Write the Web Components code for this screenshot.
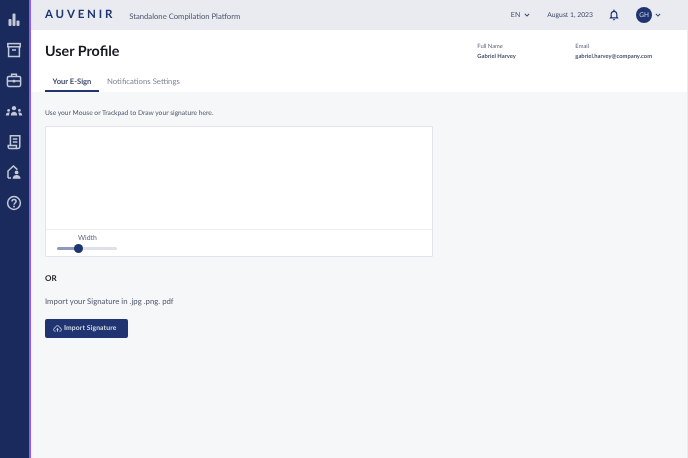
<!DOCTYPE html>
<html lang="en">
<head>
<meta charset="utf-8">
<title>User Profile</title>
<style>
html, body { margin: 0; height: 100%; }
body { font-family: Lato, sans-serif; overflow: hidden; text-rendering: geometricPrecision; }
</style>
</head>
<body>
<app-shell>
	<side-nav slot="nav"></side-nav>
	<top-bar slot="top"></top-bar>
	<profile-head slot="head"></profile-head>
	<esign-panel slot="main"></esign-panel>
</app-shell>
<script>
class AppShell extends HTMLElement {
	constructor() {
		super();
		this.attachShadow({ mode: "open" });
		this.shadowRoot.innerHTML = `
            <style>
                :host { display: flex; width: 688px; height: 458px; background: #f6f7f9; filter: blur(0.3px); }
                .content { flex: 1; display: flex; flex-direction: column; min-width: 0; border-right: 1px solid #e9ebf0; }
            </style>
            <slot name="nav"></slot>
            <div class="content">
                <slot name="top"></slot>
                <slot name="head"></slot>
                <slot name="main"></slot>
            </div>
        `;
	}
}

class SideNav extends HTMLElement {
	constructor() {
		super();
		this.attachShadow({ mode: "open" });
		this.shadowRoot.innerHTML = `
            <style>
                :host { display: flex; flex-direction: column; align-items: center; box-sizing: border-box; width: 31px; height: 458px; padding: 10px 1px 0 0; background: #1b2a5c; border-right: 2px solid #8d5cf6; gap: 12.7px; }
                svg { width: 18px; height: 18px; display: block; fill: none; stroke: #c3c9d8; stroke-width: 1.5; }
                .solid { fill: #c3c9d8; stroke: none; }
            </style>
            <svg viewBox="0 0 18 18"><g class="solid"><rect x="3.500" y="9" width="3" height="7" rx="1"/><rect x="7.500" y="3.500" width="3" height="12.500" rx="1"/><rect x="11.500" y="10.500" width="3" height="5.500" rx="1"/></g></svg>
            <svg viewBox="0 0 18 18"><rect x="2.800" y="2.600" width="12.400" height="3.200"/><path d="M3.600 5.800V15.400H14.400V5.800M7 9H11"/></svg>
            <svg viewBox="0 0 18 18"><rect x="2.400" y="5.400" width="13.200" height="10" rx="1.400"/><path d="M6.600 5.400V3.200H11.400V5.400M2.400 10H15.600"/><rect class="solid" x="7.800" y="8.800" width="2.400" height="2.600"/></svg>
            <svg viewBox="0 0 18 18"><g class="solid"><circle cx="9" cy="6.200" r="2.100"/><path d="M5.800 13.400c0-2.400 1.400-3.600 3.200-3.600s3.200 1.200 3.200 3.600z"/><circle cx="3.600" cy="8.400" r="1.400"/><path d="M.8 13.400c0-2 1.100-3 2.700-3 .5 0 .9.1 1.200.3-.5.7-.7 1.600-.7 2.700z"/><circle cx="14.400" cy="8.400" r="1.400"/><path d="M17.200 13.400c0-2-1.100-3-2.700-3-.5 0-.9.1-1.200.3.5.7.7 1.600.7 2.700z"/></g></svg>
            <svg viewBox="0 0 18 18"><path d="M5.400 12.600V2.800H14.800V13.800C14.800 14.800 14.200 15.400 13.200 15.400H4.800C3.800 15.400 3.200 14.800 3.200 13.800V12.600H11.400V15.200M7.800 6H12.400M7.800 9H12.400"/></svg>
            <svg viewBox="0 0 18 18"><path d="M3 15V8L8.400 3 12.400 6.600M3 15H6"/><circle class="solid" cx="11.600" cy="9.400" r="1.900"/><path class="solid" d="M7.600 15.800c0-2.500 1.700-3.800 4-3.800s4 1.300 4 3.800z"/></svg>
            <svg viewBox="0 0 18 18"><circle cx="9" cy="9" r="6.400"/><path d="M7 7.400C7 6.200 7.900 5.400 9 5.400s2.100.8 2.100 1.900c0 1.600-2.100 1.800-2.100 3.400"/><circle class="solid" cx="9" cy="12.500" r=".9"/></svg>
        `;
	}
}

class TopBar extends HTMLElement {
	constructor() {
		super();
		this.attachShadow({ mode: "open" });
		this.shadowRoot.innerHTML = `
            <style>
                :host { display: flex; align-items: center; box-sizing: border-box; height: 30px; padding: 0 26px 0 14px; background: #e9ebf0; color: #424c6b; font-size: 8px; }
                .logo { font-size: 11.500px; font-weight: 700; letter-spacing: 2.800px; color: #1f3470; margin-top: -1px; }
                .sub { margin-left: 14px; margin-top: 1px; font-size: 7.700px; color: #4b556f; }
                .lang { margin-left: auto; display: flex; align-items: center; gap: 4px; font-size: 7px; }
                .date { margin-left: 17px; font-size: 6.800px; }
                .bell { margin-left: 15px; width: 12px; height: 12px; display: block; }
                .avatar { margin-left: 16px; width: 16px; height: 16px; border-radius: 50%; background: #1f3470; color: #cdd3e2; font-size: 6.500px; display: flex; align-items: center; justify-content: center; }
                .caret { width: 6px; height: 4.300px; display: block; fill: none; stroke: #424c6b; stroke-width: 1.200; }
                .last { margin-left: 3px; }
            </style>
            <span class="logo">AUVENIR</span>
            <span class="sub">Standalone Compilation Platform</span>
            <span class="lang">EN <svg class="caret" viewBox="0 0 7 5"><path d="M1 1L3.500 3.600L6 1"/></svg></span>
            <span class="date">August 1, 2023</span>
            <svg class="bell" viewBox="0 0 12 12"><path fill="#1f3470" d="M6 .6c.4 0 .7.3.7.7v.5c1.700.3 2.700 1.600 2.700 3.400v2.600l1 1.100v.5H1.600v-.5l1-1.100V5.200c0-1.800 1-3.100 2.700-3.400v-.5c0-.4.3-.7.7-.7zM4.900 10.200h2.200c0 .7-.5 1.200-1.100 1.200s-1.100-.5-1.100-1.200z"/><path fill="#e9ebf0" d="M6 2.900c-1.400 0-2.200 1-2.200 2.400v3h4.400v-3c0-1.400-.8-2.400-2.200-2.400z"/></svg>
            <span class="avatar">GH</span>
            <svg class="caret last" viewBox="0 0 7 5"><path d="M1 1L3.500 3.600L6 1"/></svg>
        `;
	}
}

class InfoField extends HTMLElement {
	constructor() {
		super();
		this.attachShadow({ mode: "open" });
		this.shadowRoot.innerHTML = `
            <style>
                :host { display: block; font-size: 5.800px; line-height: 8px; color: #5d6579; }
                .value { margin-top: 2px; font-weight: 700; color: #4a5268; }
            </style>
            <div>${this.getAttribute("label")}</div>
            <div class="value"><slot></slot></div>
        `;
	}
}
customElements.define("info-field", InfoField);

class ProfileHead extends HTMLElement {
	constructor() {
		super();
		this.attachShadow({ mode: "open" });
		this.shadowRoot.innerHTML = `
            <style>
                :host { display: block; box-sizing: border-box; height: 62px; padding: 11px 0 0 14px; background: #fff; }
                .row { display: flex; justify-content: space-between; align-items: flex-start; padding-right: 35px; height: 23px; }
                h1 { margin: 1px 0 0; font-size: 14.300px; line-height: 20px; font-weight: 700; color: #15181f; }
                .info { display: flex; margin-top: 2px; }
                info-field:first-child { width: 98px; }
                .tabs { display: flex; margin-top: 8px; white-space: nowrap; }
                .tab { padding: 3px 8px; line-height: 12px; font-size: 7.750px; color: #7d8496; }
                .tab.on { box-sizing: border-box; width: 54px; height: 20px; padding: 3px 0 0; text-align: center; font-size: 7.600px; color: #424c6b; font-weight: 700; border-bottom: 2px solid #1f3470; }
            </style>
            <div class="row">
                <h1>User Profile</h1>
                <div class="info">
                    <info-field label="Full Name">Gabriel Harvey</info-field>
                    <info-field label="Email">gabriel.harvey@company.com</info-field>
                </div>
            </div>
            <div class="tabs">
                <div class="tab on">Your E-Sign</div>
                <div class="tab">Notifications Settings</div>
            </div>
        `;
	}
}

class SignaturePad extends HTMLElement {
	constructor() {
		super();
		this.attachShadow({ mode: "open" });
		this.shadowRoot.innerHTML = `
            <style>
                :host { display: block; box-sizing: border-box; width: 388px; height: 131px; background: #fff; border: 1px solid #e2e4ea; border-radius: 1px; }
                .canvas { height: 102px; border-bottom: 1px solid #eceef1; }
                .tools { padding: 3px 0 0 11px; }
                .label { margin-left: 21px; font-size: 6.900px; line-height: 10px; color: #5a6276; }
                .track { position: relative; width: 60px; height: 3px; margin-top: 4px; border-radius: 2px; background: #dfe1e7; }
                .fill { width: 21px; height: 100%; border-radius: 2px; background: #8f99bb; }
                .thumb { position: absolute; left: 16.500px; top: -3px; width: 9px; height: 9px; border-radius: 50%; background: #1f3470; }
            </style>
            <div class="canvas"></div>
            <div class="tools">
                <div class="label">Width</div>
                <div class="track"><div class="fill"></div><div class="thumb"></div></div>
            </div>
        `;
	}
}
customElements.define("signature-pad", SignaturePad);

class EsignPanel extends HTMLElement {
	constructor() {
		super();
		this.attachShadow({ mode: "open" });
		this.shadowRoot.innerHTML = `
            <style>
                :host { display: block; padding: 16px 0 0 14px; color: #4f576c; }
                p { margin: 0; }
                .hint { font-size: 6.700px; line-height: 10px; margin-bottom: 8px; }
                .or { margin-top: 16px; font-size: 8px; line-height: 11px; font-weight: 700; color: #20242e; }
                .import { margin-top: 12px; font-size: 7.800px; line-height: 11px; }
                button { display: flex; align-items: center; gap: 2px; box-sizing: border-box; width: 83px; height: 19px; margin-top: 11.500px; padding: 0 0 0 8px; border: 0; border-radius: 2px; background: #1f3470; color: #d4d9e6; font: 700 6.800px Lato, sans-serif; letter-spacing: .1px; text-rendering: geometricPrecision; }
                svg { width: 9px; height: 9px; display: block; fill: none; stroke: #d4d9e6; stroke-width: 1; }
            </style>
            <p class="hint">Use your Mouse or Trackpad to Draw your signature here.</p>
            <signature-pad></signature-pad>
            <p class="or">OR</p>
            <p class="import">Import your Signature in .jpg .png. pdf</p>
            <button type="button"><svg viewBox="0 0 10 10"><path d="M3 8H2.400C1.300 8 .6 7.200 .6 6.200S1.300 4.500 2.200 4.400C2.500 3 3.600 2 5 2s2.500 1 2.800 2.400C8.700 4.500 9.400 5.200 9.400 6.200S8.700 8 7.600 8H7M5 8.600V5M3.700 6.200L5 4.900L6.300 6.200"/></svg>Import Signature</button>
        `;
	}
}

customElements.define("app-shell", AppShell);
customElements.define("side-nav", SideNav);
customElements.define("top-bar", TopBar);
customElements.define("profile-head", ProfileHead);
customElements.define("esign-panel", EsignPanel);
</script>
</body>
</html>
